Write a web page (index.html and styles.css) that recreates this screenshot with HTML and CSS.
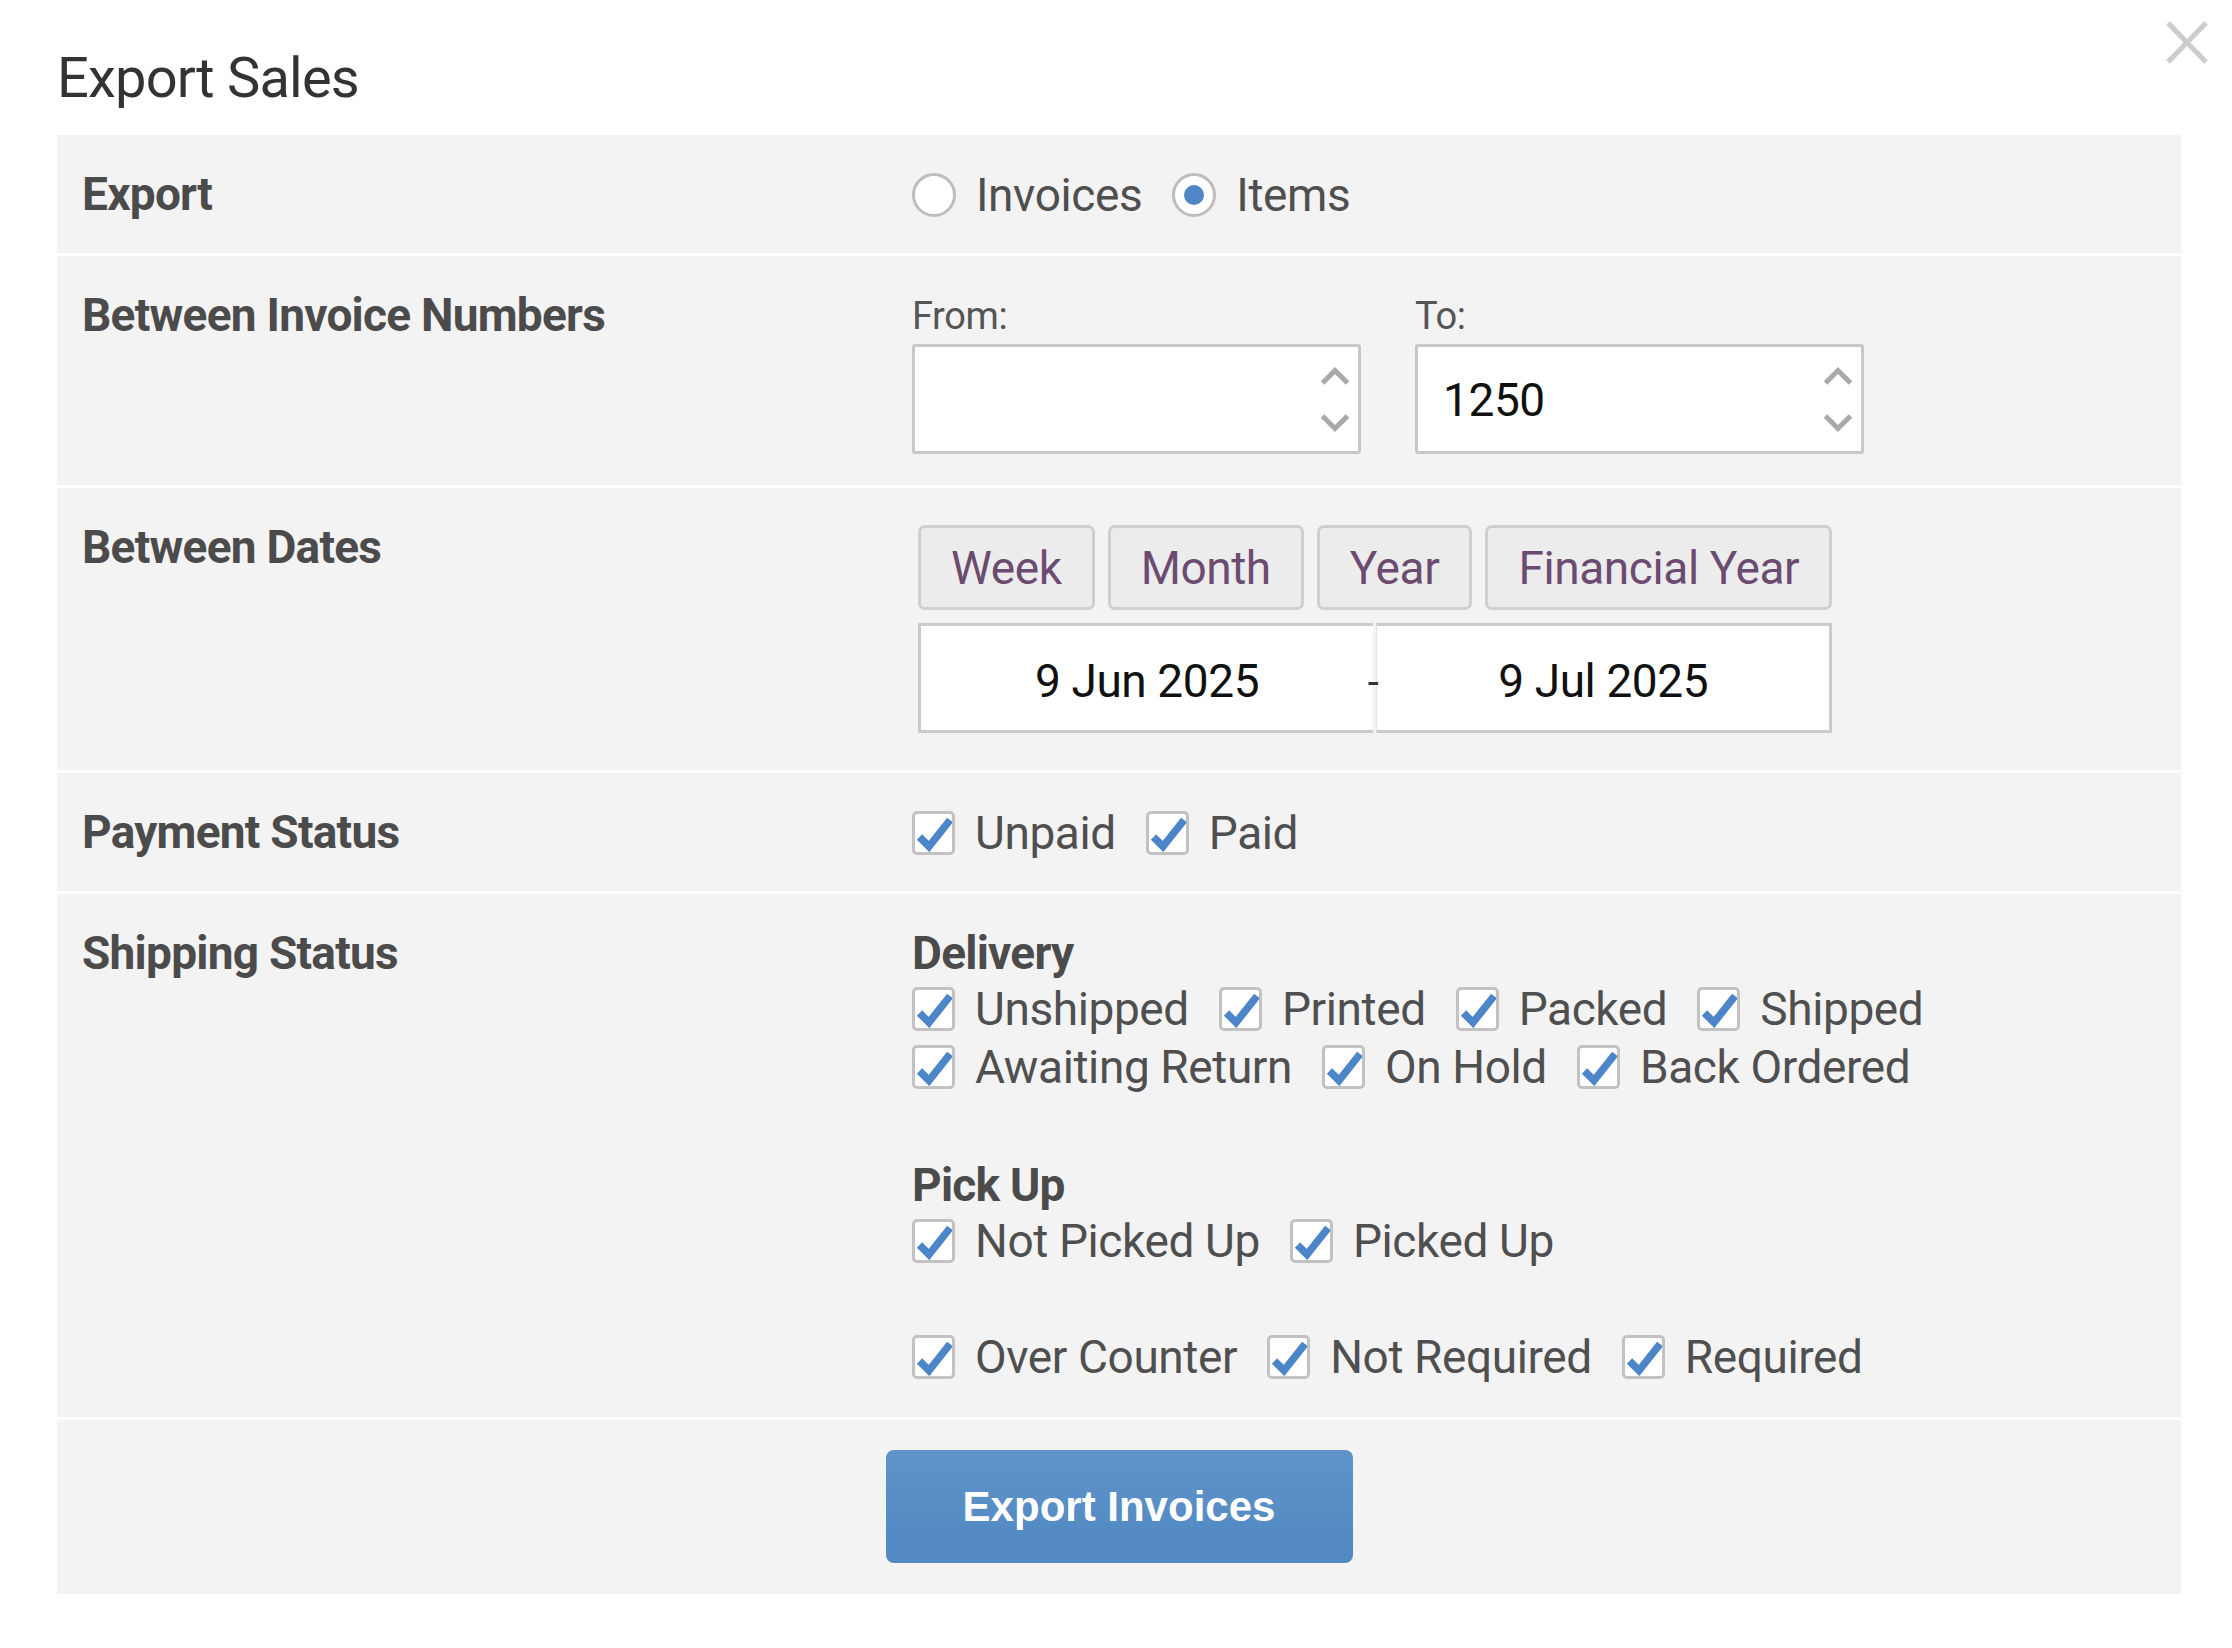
FILE: index.html
```html
<!DOCTYPE html>
<html lang="en">
<head>
<meta charset="utf-8">
<title>Export Sales</title>
<link rel="stylesheet" href="styles.css">
</head>
<body>
<div class="modal">
  <button class="close" aria-label="Close">
    <svg viewBox="0 0 42 43" width="42" height="43"><path d="M2 2 L40 41 M40 2 L2 41" stroke="#cccccc" stroke-width="5" fill="none"/></svg>
  </button>
  <h1 class="title">Export Sales</h1>
  <div class="panel">
    <div class="row">
      <div class="label">Export</div>
      <div class="content">
        <div class="options">
          <label class="opt"><span class="radio"></span>Invoices</label>
          <label class="opt"><span class="radio checked"></span>Items</label>
        </div>
      </div>
    </div>

    <div class="row">
      <div class="label">Between Invoice Numbers</div>
      <div class="content">
        <div class="num-fields">
          <div class="field">
            <div class="field-label">From:</div>
            <div class="num">
              <span class="num-value"></span>
              <svg class="spin" viewBox="0 0 30 67" width="30" height="67"><path d="M2.5 17 L15 4.5 L27.5 17 M2.5 50 L15 62.5 L27.5 50" stroke="#a9a9a9" stroke-width="5" fill="none"/></svg>
            </div>
          </div>
          <div class="field">
            <div class="field-label">To:</div>
            <div class="num">
              <span class="num-value">1250</span>
              <svg class="spin" viewBox="0 0 30 67" width="30" height="67"><path d="M2.5 17 L15 4.5 L27.5 17 M2.5 50 L15 62.5 L27.5 50" stroke="#a9a9a9" stroke-width="5" fill="none"/></svg>
            </div>
          </div>
        </div>
      </div>
    </div>

    <div class="row">
      <div class="label">Between Dates</div>
      <div class="content">
        <div class="dates">
          <div class="presets">
            <button class="preset">Week</button>
            <button class="preset">Month</button>
            <button class="preset">Year</button>
            <button class="preset">Financial Year</button>
          </div>
          <div class="range">
            <div class="date start">9 Jun 2025</div>
            <div class="dash">-</div>
            <div class="date end">9 Jul 2025</div>
          </div>
        </div>
      </div>
    </div>

    <div class="row">
      <div class="label">Payment Status</div>
      <div class="content">
        <div class="options">
          <label class="opt"><span class="cb"><svg viewBox="0 0 37 38" width="37" height="38"><path d="M4.5 23 L14 32.5 L35 6" stroke="#4d86c8" stroke-width="7.5" fill="none"/></svg></span>Unpaid</label>
          <label class="opt"><span class="cb"><svg viewBox="0 0 37 38" width="37" height="38"><path d="M4.5 23 L14 32.5 L35 6" stroke="#4d86c8" stroke-width="7.5" fill="none"/></svg></span>Paid</label>
        </div>
      </div>
    </div>

    <div class="row">
      <div class="label">Shipping Status</div>
      <div class="content">
        <div class="group">
          <div class="group-title">Delivery</div>
          <div class="opt-line">
            <label class="opt"><span class="cb"><svg viewBox="0 0 37 38" width="37" height="38"><path d="M4.5 23 L14 32.5 L35 6" stroke="#4d86c8" stroke-width="7.5" fill="none"/></svg></span>Unshipped</label>
            <label class="opt"><span class="cb"><svg viewBox="0 0 37 38" width="37" height="38"><path d="M4.5 23 L14 32.5 L35 6" stroke="#4d86c8" stroke-width="7.5" fill="none"/></svg></span>Printed</label>
            <label class="opt"><span class="cb"><svg viewBox="0 0 37 38" width="37" height="38"><path d="M4.5 23 L14 32.5 L35 6" stroke="#4d86c8" stroke-width="7.5" fill="none"/></svg></span>Packed</label>
            <label class="opt"><span class="cb"><svg viewBox="0 0 37 38" width="37" height="38"><path d="M4.5 23 L14 32.5 L35 6" stroke="#4d86c8" stroke-width="7.5" fill="none"/></svg></span>Shipped</label>
          </div>
          <div class="opt-line">
            <label class="opt"><span class="cb"><svg viewBox="0 0 37 38" width="37" height="38"><path d="M4.5 23 L14 32.5 L35 6" stroke="#4d86c8" stroke-width="7.5" fill="none"/></svg></span>Awaiting Return</label>
            <label class="opt"><span class="cb"><svg viewBox="0 0 37 38" width="37" height="38"><path d="M4.5 23 L14 32.5 L35 6" stroke="#4d86c8" stroke-width="7.5" fill="none"/></svg></span>On Hold</label>
            <label class="opt"><span class="cb"><svg viewBox="0 0 37 38" width="37" height="38"><path d="M4.5 23 L14 32.5 L35 6" stroke="#4d86c8" stroke-width="7.5" fill="none"/></svg></span>Back Ordered</label>
          </div>
        </div>
        <div class="group pickup">
          <div class="group-title">Pick Up</div>
          <div class="opt-line">
            <label class="opt"><span class="cb"><svg viewBox="0 0 37 38" width="37" height="38"><path d="M4.5 23 L14 32.5 L35 6" stroke="#4d86c8" stroke-width="7.5" fill="none"/></svg></span>Not Picked Up</label>
            <label class="opt"><span class="cb"><svg viewBox="0 0 37 38" width="37" height="38"><path d="M4.5 23 L14 32.5 L35 6" stroke="#4d86c8" stroke-width="7.5" fill="none"/></svg></span>Picked Up</label>
          </div>
        </div>
        <div class="group counter">
          <div class="opt-line">
            <label class="opt"><span class="cb"><svg viewBox="0 0 37 38" width="37" height="38"><path d="M4.5 23 L14 32.5 L35 6" stroke="#4d86c8" stroke-width="7.5" fill="none"/></svg></span>Over Counter</label>
            <label class="opt"><span class="cb"><svg viewBox="0 0 37 38" width="37" height="38"><path d="M4.5 23 L14 32.5 L35 6" stroke="#4d86c8" stroke-width="7.5" fill="none"/></svg></span>Not Required</label>
            <label class="opt"><span class="cb"><svg viewBox="0 0 37 38" width="37" height="38"><path d="M4.5 23 L14 32.5 L35 6" stroke="#4d86c8" stroke-width="7.5" fill="none"/></svg></span>Required</label>
          </div>
        </div>
      </div>
    </div>

    <div class="row actions">
      <button class="export-btn">Export Invoices</button>
    </div>
  </div>
</div>
</body>
</html>
```
FILE: styles.css
```css
* {
  box-sizing: border-box;
}

html,
body {
  margin: 0;
  background: #ffffff;
}

body {
  font-family: Roboto, "Liberation Sans", sans-serif;
  color: #4f4f4f;
}

.modal {
  position: relative;
  padding: 0 51px 0 57px;
}

.close {
  position: absolute;
  top: 21px;
  right: 24px;
  width: 42px;
  height: 43px;
  padding: 0;
  border: none;
  background: transparent;
}

.close svg {
  display: block;
}

.title {
  margin: 0;
  height: 135px;
  padding-top: 45px;
  font-size: 56px;
  line-height: 66px;
  font-weight: 400;
  letter-spacing: -0.8px;
  color: #333333;
}

.panel {
  display: flex;
  flex-direction: column;
  gap: 3px;
}

.row {
  display: grid;
  grid-template-columns: 855px 1fr;
  align-items: start;
  background: #f3f3f3;
  padding: 32px 0 31px;
}

.label {
  padding-left: 25px;
  font-size: 46px;
  line-height: 55px;
  font-weight: 700;
  letter-spacing: -0.75px;
  color: #4b4b4b;
}

.content {
  font-size: 46px;
  letter-spacing: -0.4px;
}

.options {
  display: flex;
  align-items: center;
  height: 55px;
  gap: 30px;
}

.opt {
  display: flex;
  align-items: center;
  gap: 20px;
  white-space: nowrap;
}

.radio {
  width: 44px;
  height: 44px;
  flex: none;
  border: 3px solid #bdbdbd;
  border-radius: 50%;
  background: #ffffff;
  display: flex;
  align-items: center;
  justify-content: center;
}

.radio.checked::after {
  content: "";
  width: 20px;
  height: 20px;
  border-radius: 50%;
  background: #4f86c6;
}

.cb {
  width: 43px;
  height: 44px;
  flex: none;
  border: 3px solid #c2c2c2;
  border-radius: 5px;
  background: #ffffff;
}

.cb svg {
  display: block;
}

/* invoice number range */
.num-fields {
  display: flex;
  gap: 54px;
}

.field {
  width: 449px;
}

.field-label {
  font-size: 38px;
  line-height: 56px;
  color: #555555;
}

.num {
  height: 110px;
  display: flex;
  align-items: center;
  padding: 0 8px 0 25px;
  border: 3px solid #c8c8c8;
  border-radius: 3px;
  background: #ffffff;
}

.num-value {
  flex: 1;
  color: #111111;
  font-size: 46px;
  padding-top: 2px;
}

.spin {
  display: block;
  flex: none;
}

/* date range */
.dates {
  display: flex;
  flex-direction: column;
  width: max-content;
  gap: 13px;
  margin: 5px 0 6px 6px;
}

.presets {
  display: flex;
  gap: 13px;
}

.preset {
  height: 85px;
  padding: 0 30px;
  border: 3px solid #cfcfcf;
  border-radius: 7px;
  background: #ececec;
  color: #6b4c70;
  font-family: Roboto, "Liberation Sans", sans-serif;
  font-size: 46px;
  letter-spacing: -0.4px;
}

.range {
  display: flex;
  height: 110px;
}

.date {
  flex: 1;
  display: flex;
  align-items: center;
  justify-content: center;
  padding-top: 5px;
  background: #ffffff;
  border: 3px solid #cbcbcb;
  color: #111111;
  font-size: 46px;
}

.date.start {
  border-right: none;
}

.date.end {
  border-left: 1px solid #e4e4e4;
}

.dash {
  width: 0;
  display: flex;
  align-items: center;
  justify-content: center;
  padding: 8px 3px 0 0;
  position: relative;
  z-index: 1;
  color: #333333;
  font-size: 40px;
}

/* shipping groups */
.group-title {
  font-weight: 700;
  line-height: 54px;
  letter-spacing: -0.75px;
  color: #4b4b4b;
}

.opt-line {
  display: flex;
  align-items: center;
  height: 58px;
  gap: 30px;
}

.group.pickup {
  margin-top: 62px;
}

.group.counter {
  margin-top: 58px;
}

/* actions */
.row.actions {
  display: flex;
  justify-content: center;
  padding: 30px 0 31px;
}

.export-btn {
  width: 467px;
  height: 113px;
  border: none;
  border-radius: 8px;
  background: linear-gradient(#5f93c9, #5188c2);
  color: #ffffff;
  font-family: "Liberation Sans", Arial, sans-serif;
  font-weight: 700;
  font-size: 42px;
}
```
